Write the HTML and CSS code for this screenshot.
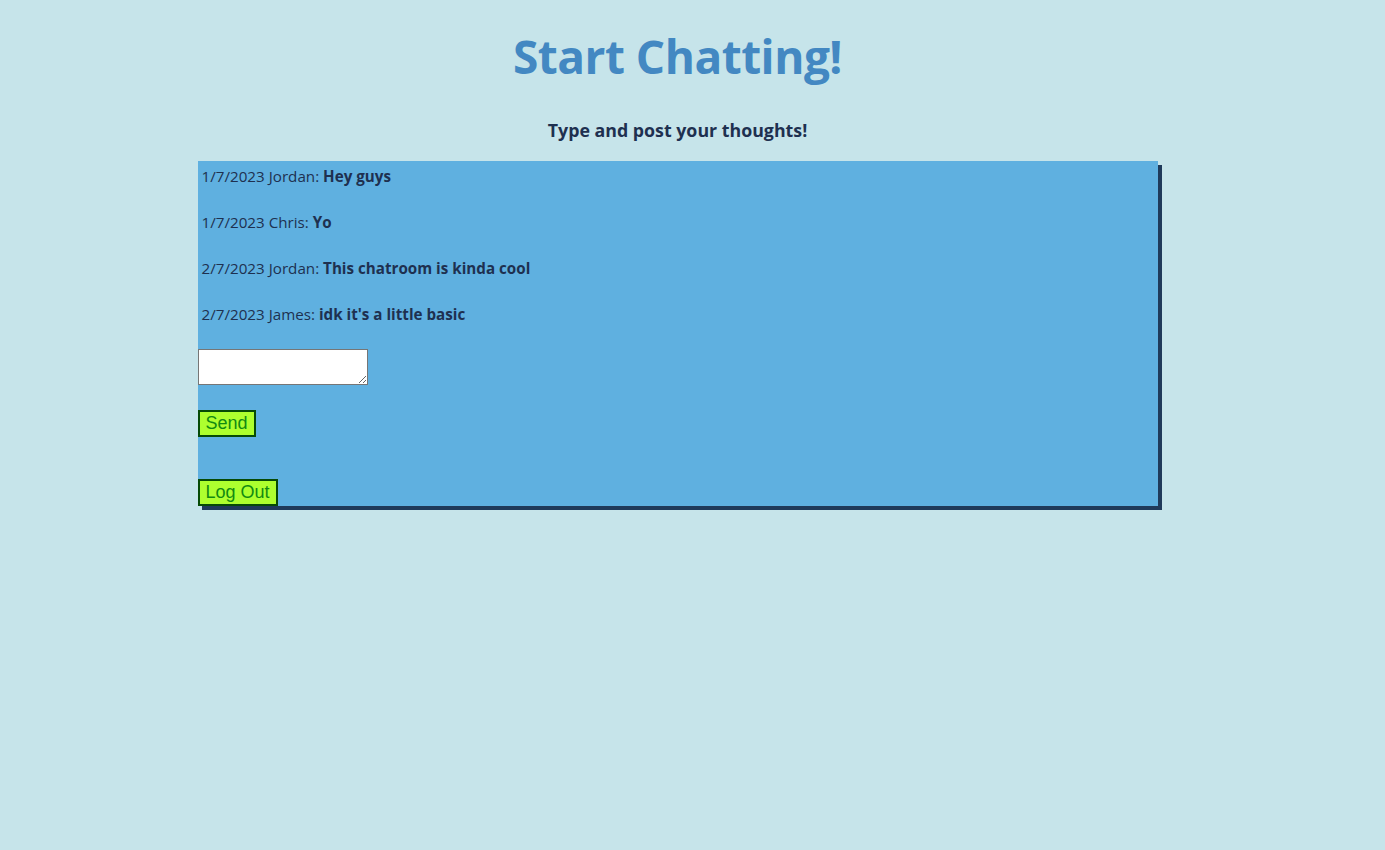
FILE: index.html
```html
<!DOCTYPE html>
<html>
<head>
<meta charset="utf-8">
<link rel="stylesheet" href="styles.css">
<title>Chat</title>
</head>
<body>
<div class="page">
  <h1 class="title">Start Chatting!</h1>
  <h3 class="subtitle">Type and post your thoughts!</h3>
  <div class="chatbox">
    <div class="messages">
      <p class="msg">1/7/2023 Jordan: <b>Hey guys</b></p>
      <p class="msg">1/7/2023 Chris: <b>Yo</b></p>
      <p class="msg">2/7/2023 Jordan: <b>This chatroom is kinda cool</b></p>
      <p class="msg">2/7/2023 James: <b>idk it's a little basic</b></p>
    </div>
    <textarea class="input"></textarea>
    <button class="btn send">Send</button>
    <button class="btn logout">Log Out</button>
  </div>
</div>
</body>
</html>
```
FILE: styles.css
```css
html, body {
  margin: 0;
  padding: 0;
  background: #c6e4ea;
}
body {
  font-family: "Open Sans", "Noto Sans", sans-serif;
  color: #1e3050;
}
.page {
  width: 1355px;
  display: flex;
  flex-direction: column;
  align-items: center;
  padding-bottom: 40px;
}
.title {
  margin: 26px 0 0;
  font-size: 46px;
  line-height: 60px;
  font-weight: 700;
  color: #4388c2;
  letter-spacing: -0.5px;
}
.subtitle {
  margin: 32px 0 0;
  font-size: 17.8px;
  line-height: 25px;
  font-weight: 700;
  color: #1e3050;
}
.chatbox {
  margin-top: 18px;
  width: 960px;
  height: 345px;
  box-sizing: border-box;
  background: #5fb0e0;
  box-shadow: 4px 4px 0 #1f3a5a;
  display: flex;
  flex-direction: column;
  align-items: flex-start;
}
.messages {
  display: flex;
  flex-direction: column;
  gap: 17px;
}
.msg {
  margin: 0;
  padding: 5px 4px 3px;
  font-size: 15.2px;
  line-height: 21px;
  color: #1e3050;
}
.msg b {
  font-weight: 700;
}
.input {
  margin-top: 21px;
  width: 170px;
  height: 36px;
  box-sizing: border-box;
  border: 1px solid #767676;
  background: #fff;
  padding: 2px;
}
.btn {
  font-family: "Liberation Sans", Arial, sans-serif;
  font-size: 18px;
  line-height: 21px;
  color: #118a11;
  background: #adff2f;
  border: 2px solid #064a06;
  padding: 1px 6px 1px;
  margin: 0;
  height: 27px;
  box-sizing: border-box;
}
.send {
  margin-top: 25px;
}
.logout {
  margin-top: auto;
}
```
